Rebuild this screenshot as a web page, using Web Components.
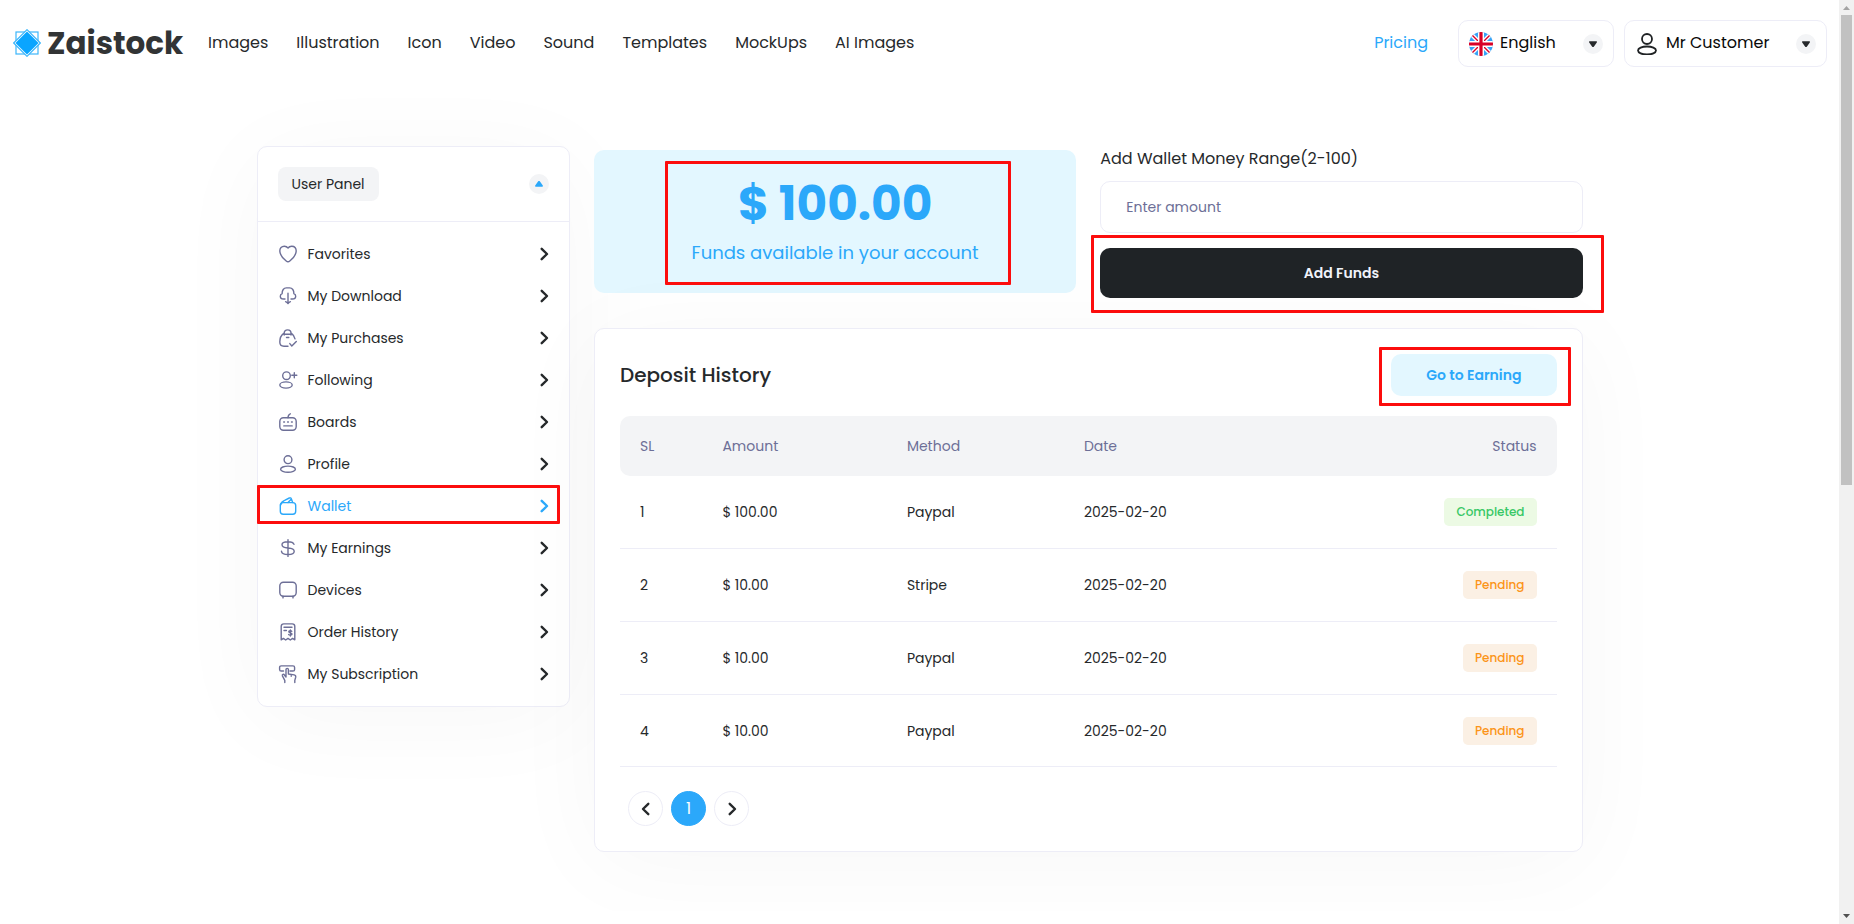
<!DOCTYPE html>
<html lang="en">
<head>
<meta charset="utf-8">
<meta name="viewport" content="width=device-width, initial-scale=1">
<title>Zaistock - Wallet</title>
<style>
  :root {
    --blue: #2ba8fa;
    --blue-soft: #e3f7ff;
    --dark: #26292b;
    --black: #0a0a0a;
    --muted: #6d6f97;
    --line: #ededf7;
    --grey: #f3f4f6;
    --shadow: 0 12px 100px rgba(33, 33, 33, 0.035);
  }

  body {
    margin: 0;
    padding-right: 15px;
    background: #fff;
    color: var(--dark);
    font-family: Poppins, Inter, sans-serif;
    font-size: 14px;
    line-height: 20px;
  }

  main {
    display: grid;
    grid-template-columns: repeat(12, 1fr);
    gap: 24px;
    max-width: 1326px;
    margin: 0 auto;
    padding: 59px 24px;
    align-items: start;
  }

  side-panel { grid-column: span 3; }

  .content {
    grid-column: span 9;
    display: grid;
    grid-template-columns: 1fr 1fr;
    column-gap: 24px;
    row-gap: 30px;
    padding-top: 4px;
    align-items: start;
  }

  deposit-history { grid-column: 1 / -1; }
</style>
</head>
<body>
  <site-header></site-header>

  <main>
    <side-panel heading="User Panel">
      <side-item icon="heart">Favorites</side-item>
      <side-item icon="download">My Download</side-item>
      <side-item icon="bag">My Purchases</side-item>
      <side-item icon="follow">Following</side-item>
      <side-item icon="boards">Boards</side-item>
      <side-item icon="user">Profile</side-item>
      <callout-frame style="--inset: 0 9px 3px -1px">
        <side-item icon="wallet" active>Wallet</side-item>
      </callout-frame>
      <side-item icon="dollar">My Earnings</side-item>
      <side-item icon="device">Devices</side-item>
      <side-item icon="receipt">Order History</side-item>
      <side-item icon="touch">My Subscription</side-item>
    </side-panel>

    <div class="content">
      <balance-card amount="$ 100.00">Funds available in your account</balance-card>
      <fund-form></fund-form>
      <deposit-history></deposit-history>
    </div>
  </main>

  <scroll-rail></scroll-rail>

<script>
const ICONS = {
  heart: '<path d="M9 3C8.100 1.700 6.700 1.200 5.300 1.200 2.600 1.200.8 3.200.8 6.100c0 3.700 3.400 7.500 6.400 9.900 1.100.9 2.500.9 3.600 0 3-2.400 6.400-6.200 6.400-9.900 0-2.900-1.800-4.900-4.500-4.900C11.300 1.200 9.900 1.700 9 3z"/>',
  download: '<path d="M6 12H4.700C2.700 12 1.300 10.800 1.300 9.200c0-1.200.7-2.100 1.800-2.500C3 3.200 4.700.9 7.400.9h3.200c2.700 0 4.400 2.300 4.300 5.800 1.100.4 1.800 1.300 1.800 2.500 0 1.600-1.400 2.800-3.400 2.800H12"/><path d="M9 6.200v10.400M6.600 14.700c.9.4 1.800 1 2.400 1.900.6-.9 1.500-1.500 2.400-1.900"/>',
  bag: '<path d="M5.200 6V4.300C5.200 2.300 6.500.9 8.600.9S12 2.300 12 4.300V6M4.700 4.400C2.400 6 .8 9.800.8 13c0 2.700 1.500 4.200 4.200 4.200h4M5.300 5.300h6.600M7.500 8.500h2.300M12.500 4.400c1.600 1.100 2.800 3.200 3.500 5.500M10.800 14.600l2 2.400 4.500-4.600"/>',
  follow: '<circle cx="7.500" cy="4.700" r="3.800"/><ellipse cx="7" cy="14" rx="6.200" ry="3.100"/><path d="M12.800 4.300h5M15.300 1.800v5"/>',
  boards: '<rect x=".8" y="4.800" width="16.400" height="12.400" rx="3.600"/><path d="M9 4.800C9 2.800 9.600 1.400 11.300.8M4.700 9h.8M8.600 9h.8M12.500 9h.8M4.800 12.900h8.400"/>',
  user: '<circle cx="9" cy="4.700" r="3.900"/><ellipse cx="9" cy="14.200" rx="7.400" ry="3.100"/>',
  wallet: '<rect x="1.300" y="5.600" width="15.400" height="11.600" rx="3"/><path d="M1.500 8C2 5.700 3.300 4.300 5.600 3.300L10.300 1c1-.4 1.700 0 2.100 1l1.300 3.600M9 5.600 12.400 2"/>',
  dollar: '<path d="M9 .6v16.800M15 5.400C14.400 3.600 12.500 2.700 9 2.700S3 3.700 3 5.700 5.200 8.700 9 9s6.200 1 6.200 3.200-2.300 3.300-6.200 3.300-6.200-1.200-6.500-3.200"/>',
  device: '<rect x=".8" y="1.200" width="16.400" height="14" rx="3.600"/><path d="M4 15.200v1.700M14 15.200v1.700"/>',
  receipt: '<path d="M2.200 16.800V3.500c0-1.700.9-2.600 2.600-2.600h8.400c1.700 0 2.600.9 2.600 2.600v13.300l-2.200-1.400-2.300 1.600L9 15.400 6.700 17l-2.300-1.600zM5 4.200h8M5 7.500h2.400"/><path d="M12.800 8.300c-.5-.7-3-.8-3 .5s3.200.8 3.200 2.200-2.800 1.500-3.400.5M11.400 7v6"/>',
  touch: '<path d="M4.500 6H2.200C1.200 6 .6 5.400.6 4.400V2.600C.6 1.500 1.200.9 2.200.9H14c1 0 1.600.6 1.600 1.700v1.800c0 1-.6 1.600-1.600 1.600h-3"/><path d="M5.800 17.500v-2.200L3.400 10.800c-.5-1.400 1.300-2 2-.8l1.600 2V4.600c0-1.600 2.400-1.600 2.400 0v4.400l5.800.9c1.200.3 1.700 1.100 1.500 2.300l-.9 3.200v2.100M12.200 9.500v1.700"/>'
};

class UiIcon extends HTMLElement {
  constructor() {
    super();
    this.attachShadow({ mode: "open" });
  }

  connectedCallback() {
    this.shadowRoot.innerHTML = `
      <style>
        :host { display: block; width: 18px; height: 18px; }
        svg { display: block; overflow: visible; }
        g { fill: none; stroke: currentColor; stroke-width: 1.4; stroke-linecap: round; stroke-linejoin: round; }
      </style>
      <svg viewBox="0 0 18 18" width="100%" height="100%" aria-hidden="true"><g>${ICONS[this.getAttribute("name")] || ""}</g></svg>
    `;
  }
}

// Small round badge with a triangle, used by the dropdowns and the panel head
class CaretDot extends HTMLElement {
  constructor() {
    super();
    this.attachShadow({ mode: "open" });
    this.shadowRoot.innerHTML = `
      <style>
        :host { display: block; width: 20px; height: 20px; border-radius: 50%; background: var(--grey); color: var(--dark); }
        :host([up]) svg { transform: rotate(180deg); }
        :host([up]) { color: var(--blue); }
        svg { display: block; }
      </style>
      <svg viewBox="0 0 20 20" width="20" height="20" aria-hidden="true">
        <path d="M6.800 7.200h6.400c.7 0 1 .7.600 1.200l-3 4.300c-.4.500-1.200.5-1.600 0l-3-4.300c-.4-.5-.1-1.200.6-1.200z" fill="currentColor"/>
      </svg>
    `;
  }
}

class ChevronIcon extends HTMLElement {
  constructor() {
    super();
    this.attachShadow({ mode: "open" });
    this.shadowRoot.innerHTML = `
      <style>
        :host { display: block; width: 10px; height: 14px; }
        :host([left]) svg { transform: scaleX(-1); }
        svg { display: block; }
      </style>
      <svg viewBox="0 0 10 14" width="10" height="14" aria-hidden="true">
        <path d="M2.700 1.800 8 7l-5.300 5.200" fill="none" stroke="currentColor" stroke-width="2.400" stroke-linecap="round" stroke-linejoin="round"/>
      </svg>
    `;
  }
}

// Red outline drawn round whatever is slotted in; --inset moves its edges
class CalloutFrame extends HTMLElement {
  constructor() {
    super();
    this.attachShadow({ mode: "open" });
    this.shadowRoot.innerHTML = `
      <style>
        :host { display: block; position: relative; }
        :host::after {
          content: "";
          position: absolute;
          inset: var(--inset, -8px);
          border: 3px solid #fc0d0d;
          border-radius: 1px;
          pointer-events: none;
        }
      </style>
      <slot></slot>
    `;
  }
}

class SiteLogo extends HTMLElement {
  constructor() {
    super();
    this.attachShadow({ mode: "open" });
    this.shadowRoot.innerHTML = `
      <style>
        :host { display: block; }
        a {
          display: flex;
          align-items: center;
          gap: 6px;
          color: #323435;
          text-decoration: none;
          font-size: 31px;
          font-weight: 700;
          line-height: 32px;
        }
      </style>
      <a href="#">
        <svg viewBox="0 0 28 28" width="28" height="28" aria-hidden="true">
          <rect x="3" y="3" width="22" height="22" fill="none" stroke="#3cb6fb" stroke-width="1.200"/>
          <path d="M14 .7 27.300 14 14 27.300.7 14z" fill="#fff" stroke="#3cb6fb" stroke-width="1.200"/>
          <path d="M14 2.500 25.500 14 14 25.500 2.500 14z" fill="#0aa5ff"/>
        </svg>
        <span>Zaistock</span>
      </a>
    `;
  }
}

class SiteHeader extends HTMLElement {
  constructor() {
    super();
    this.attachShadow({ mode: "open" });
  }

  connectedCallback() {
    const links = ["Images", "Illustration", "Icon", "Video", "Sound", "Templates", "MockUps", "AI Images"];

    this.shadowRoot.innerHTML = `
      <style>
        :host { display: block; }

        header {
          display: flex;
          align-items: center;
          padding: 20px 12px 20px 13px;
          font-size: 16px;
          line-height: 24px;
        }

        site-logo { width: 173px; }

        nav {
          display: flex;
          gap: 28px;
          margin-left: 22px;
          flex: 1;
        }

        site-logo, nav, .pricing { padding-bottom: 2px; }

        a { color: var(--dark); text-decoration: none; }
        .pricing { color: var(--blue); margin-right: 30px; }

        .box {
          position: relative;
          box-sizing: border-box;
          height: 47px;
          border: 1px solid var(--line);
          border-radius: 10px;
          background: #fff;
        }

        .box > svg, .box > caret-dot {
          position: absolute;
          top: 50%;
          transform: translateY(-50%);
          pointer-events: none;
        }

        .box > caret-dot { right: 10px; }
        .box > .flag { left: 10px; }
        .box > .person { left: 12px; }

        select, button {
          box-sizing: border-box;
          width: 100%;
          height: 100%;
          margin: 0;
          border: 0;
          border-radius: 10px;
          background: none;
          color: var(--black);
          font: inherit;
          text-align: left;
          appearance: none;
          cursor: pointer;
        }

        .language { width: 156px; margin-right: 10px; }
        .account { width: 203px; }
        select, button { padding: 0 40px 2px 41px; }
      </style>

      <header>
        <site-logo></site-logo>
        <nav>${links.map((l) => `<a href="#">${l}</a>`).join("")}</nav>
        <a class="pricing" href="#">Pricing</a>

        <div class="box language">
          <select aria-label="Language"><option>English</option></select>
          <svg class="flag" viewBox="0 0 24 24" width="24" height="24" aria-hidden="true">
            <defs><clipPath id="round"><circle cx="12" cy="12" r="12"/></clipPath></defs>
            <g clip-path="url(#round)">
              <path fill="#36a3f7" d="M0 0h24v24H0z"/>
              <path d="M2 2l20 20M22 2 2 22" stroke="#fff" stroke-width="4"/>
              <path d="M2 2l20 20M22 2 2 22" stroke="#d80027" stroke-width="1.400"/>
              <path d="M12 0v24M0 12h24" stroke="#fff" stroke-width="6"/>
              <path d="M12 0v24M0 12h24" stroke="#d80027" stroke-width="3.200"/>
            </g>
          </svg>
          <caret-dot></caret-dot>
        </div>

        <div class="box account">
          <button type="button" aria-haspopup="menu">Mr Customer</button>
          <svg class="person" viewBox="0 0 20 22" width="20" height="22" fill="none" stroke="#1f2224" stroke-width="1.800" aria-hidden="true">
            <circle cx="10" cy="6" r="5"/>
            <ellipse cx="10" cy="17.500" rx="9" ry="4"/>
          </svg>
          <caret-dot></caret-dot>
        </div>
      </header>
    `;
  }
}

class SidePanel extends HTMLElement {
  constructor() {
    super();
    this.attachShadow({ mode: "open" });
  }

  connectedCallback() {
    this.shadowRoot.innerHTML = `
      <style>
        :host {
          display: block;
          border: 1px solid var(--line);
          border-radius: 10px;
          background: #fff;
          box-shadow: var(--shadow);
        }

        .head {
          display: flex;
          align-items: center;
          justify-content: space-between;
          padding: 20px;
          border-bottom: 1px solid var(--line);
        }

        .title {
          padding: 7px 14px;
          border-radius: 8px;
          background: var(--grey);
        }

        button { padding: 0; border: 0; background: none; cursor: pointer; }
        nav { padding: 11px 0; }
      </style>

      <div class="head">
        <span class="title">${this.getAttribute("heading")}</span>
        <button type="button" aria-label="Collapse panel"><caret-dot up></caret-dot></button>
      </div>
      <nav><slot></slot></nav>
    `;
  }
}

class SideItem extends HTMLElement {
  constructor() {
    super();
    this.attachShadow({ mode: "open" });
  }

  connectedCallback() {
    this.shadowRoot.innerHTML = `
      <style>
        :host { display: block; }

        a {
          display: flex;
          align-items: center;
          gap: 11px;
          padding: 11px 20px 11px 21px;
          color: var(--dark);
          text-decoration: none;
        }

        ui-icon { color: var(--muted); }
        span { flex: 1; }
        :host([active]) a, :host([active]) ui-icon { color: var(--blue); }
      </style>

      <a href="#">
        <ui-icon name="${this.getAttribute("icon")}"></ui-icon>
        <span><slot></slot></span>
        <chevron-icon></chevron-icon>
      </a>
    `;
  }
}

class BalanceCard extends HTMLElement {
  constructor() {
    super();
    this.attachShadow({ mode: "open" });
  }

  connectedCallback() {
    this.shadowRoot.innerHTML = `
      <style>
        :host {
          display: flex;
          justify-content: center;
          padding: 25px 20px 26px;
          border-radius: 10px;
          background: var(--blue-soft);
          color: var(--blue);
          text-align: center;
        }

        .amount { margin: 0; font-size: 47px; font-weight: 700; line-height: 58px; }
        .note { margin: 6px 0 0; font-size: 18px; line-height: 28px; }
      </style>

      <callout-frame style="--inset: -14px -32px -18px -27px">
        <p class="amount">${this.getAttribute("amount")}</p>
        <p class="note"><slot></slot></p>
      </callout-frame>
    `;
  }
}

class FundForm extends HTMLElement {
  constructor() {
    super();
    this.attachShadow({ mode: "open" });
    this.shadowRoot.innerHTML = `
      <style>
        :host { display: block; }

        label {
          display: block;
          margin-bottom: 13px;
          font-size: 16px;
          line-height: 18px;
        }

        input, button {
          display: block;
          box-sizing: border-box;
          width: 100%;
          margin: 0;
          border-radius: 10px;
          font: inherit;
        }

        input {
          height: 52px;
          margin-bottom: 15px;
          padding: 0 25px;
          border: 1px solid var(--line);
          background: #fff;
          color: var(--dark);
        }

        input::placeholder { color: var(--muted); opacity: 1; }

        button {
          height: 50px;
          border: 0;
          background: #1f2326;
          color: #f1f3fb;
          font-weight: 600;
          cursor: pointer;
        }
      </style>

      <form>
        <label for="amount">Add Wallet Money Range(2-100)</label>
        <input id="amount" type="text" inputmode="decimal" placeholder="Enter amount">
        <callout-frame style="--inset: -13px -21px -15px -9px">
          <button type="button">Add Funds</button>
        </callout-frame>
      </form>
    `;
  }
}

class StatusBadge extends HTMLElement {
  constructor() {
    super();
    this.attachShadow({ mode: "open" });
    this.shadowRoot.innerHTML = `
      <style>
        :host {
          display: inline-block;
          padding: 4px 12px;
          border-radius: 5px;
          background: #fbf0e4;
          color: #fb9519;
          font-size: 12px;
          font-weight: 500;
          line-height: 20px;
          vertical-align: middle;
        }

        :host([state="Completed"]) { background: #ecfae4; color: #38c866; }
      </style>
      <slot></slot>
    `;
  }
}

class PageNav extends HTMLElement {
  constructor() {
    super();
    this.attachShadow({ mode: "open" });
    this.shadowRoot.innerHTML = `
      <style>
        :host { display: block; }
        nav { display: flex; gap: 8px; }

        button {
          display: grid;
          place-items: center;
          box-sizing: border-box;
          width: 35px;
          height: 35px;
          padding: 0;
          border: 1px solid var(--line);
          border-radius: 50%;
          background: #fff;
          color: var(--dark);
          font: inherit;
          font-size: 16px;
          cursor: pointer;
        }

        .current { border-color: var(--blue); background: var(--blue); color: #fff; }
      </style>

      <nav aria-label="Pages">
        <button type="button" aria-label="Previous"><chevron-icon left></chevron-icon></button>
        <button type="button" class="current" aria-current="page">1</button>
        <button type="button" aria-label="Next"><chevron-icon></chevron-icon></button>
      </nav>
    `;
  }
}

class DepositHistory extends HTMLElement {
  constructor() {
    super();
    this.attachShadow({ mode: "open" });
  }

  connectedCallback() {
    const rows = [
      ["1", "$ 100.00", "Paypal", "2025-02-20", "Completed"],
      ["2", "$ 10.00", "Stripe", "2025-02-20", "Pending"],
      ["3", "$ 10.00", "Paypal", "2025-02-20", "Pending"],
      ["4", "$ 10.00", "Paypal", "2025-02-20", "Pending"]
    ];

    this.shadowRoot.innerHTML = `
      <style>
        :host {
          display: block;
          padding: 25px;
          border: 1px solid var(--line);
          border-radius: 10px;
          background: #fff;
          box-shadow: var(--shadow);
        }

        .head {
          display: flex;
          align-items: center;
          justify-content: space-between;
          margin-bottom: 20px;
        }

        h2 { margin: 0; font-size: 20px; font-weight: 500; line-height: 28px; }

        .earning {
          display: block;
          padding: 11px 35px;
          border-radius: 10px;
          background: var(--blue-soft);
          color: var(--blue);
          font-weight: 600;
          text-decoration: none;
        }

        table { width: 100%; border-collapse: separate; border-spacing: 0; table-layout: fixed; }
        th, td { padding: 0 20px; text-align: left; font-weight: 400; }
        th { height: 60px; background: var(--grey); color: var(--muted); }
        td { height: 72px; border-bottom: 1px solid var(--line); }
        tr:last-child td { height: 71px; }
        th:first-child { border-radius: 10px 0 0 10px; }
        th:last-child { border-radius: 0 10px 10px 0; }
        th:last-child, td:last-child { text-align: right; }

        page-nav { margin: 24px 0 0 8px; }
      </style>

      <div class="head">
        <h2>Deposit History</h2>
        <callout-frame style="--inset: -7px -14px -10px -12px">
          <a class="earning" href="#">Go to Earning</a>
        </callout-frame>
      </div>

      <table>
        <colgroup>
          <col style="width: 8.8%"><col style="width: 19.7%"><col style="width: 18.9%"><col style="width: 26%"><col>
        </colgroup>
        <thead>
          <tr><th scope="col">SL</th><th scope="col">Amount</th><th scope="col">Method</th><th scope="col">Date</th><th scope="col">Status</th></tr>
        </thead>
        <tbody>
          ${rows.map(([sl, amount, method, date, state]) => `
            <tr>
              <td>${sl}</td><td>${amount}</td><td>${method}</td><td>${date}</td>
              <td><status-badge state="${state}">${state}</status-badge></td>
            </tr>`).join("")}
        </tbody>
      </table>

      <page-nav></page-nav>
    `;
  }
}

class ScrollRail extends HTMLElement {
  constructor() {
    super();
    this.attachShadow({ mode: "open" });
    this.shadowRoot.innerHTML = `
      <style>
        :host {
          position: fixed;
          inset: 0 0 0 auto;
          width: 15px;
          display: flex;
          flex-direction: column;
          background: #f1f1f1;
        }

        svg { display: block; flex: none; }
        .track { flex: 1; padding: 0 2px; }
        .thumb { height: 52.6%; background: #c1c1c1; }
      </style>
      <svg viewBox="0 0 15 15" width="15" height="15" aria-hidden="true"><path d="M4 10h7L7.500 6z" fill="#a3a3a3"/></svg>
      <div class="track"><div class="thumb"></div></div>
      <svg viewBox="0 0 15 15" width="15" height="15" aria-hidden="true"><path d="M4 5h7L7.500 9z" fill="#505050"/></svg>
    `;
  }
}

customElements.define("ui-icon", UiIcon);
customElements.define("caret-dot", CaretDot);
customElements.define("chevron-icon", ChevronIcon);
customElements.define("callout-frame", CalloutFrame);
customElements.define("site-logo", SiteLogo);
customElements.define("site-header", SiteHeader);
customElements.define("side-panel", SidePanel);
customElements.define("side-item", SideItem);
customElements.define("balance-card", BalanceCard);
customElements.define("fund-form", FundForm);
customElements.define("status-badge", StatusBadge);
customElements.define("page-nav", PageNav);
customElements.define("deposit-history", DepositHistory);
customElements.define("scroll-rail", ScrollRail);
</script>
</body>
</html>
